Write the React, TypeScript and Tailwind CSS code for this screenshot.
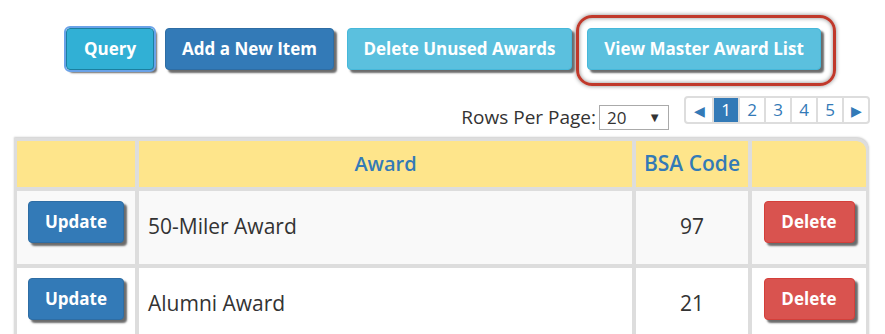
import { ReactNode } from 'react';

const font = { fontFamily: '"Open Sans", "Noto Sans", sans-serif' };

function Btn({ children, className }: { children: ReactNode; className: string }) {
  return (
    <button
      className={`h-[42px] rounded-[4px] border text-white font-bold shadow-[3px_3px_2px_#6b6b6b] ${className}`}
    >
      {children}
    </button>
  );
}

function Pager() {
  const cells = ['◀', '1', '2', '3', '4', '5', '▶'];
  return (
    <div className="flex h-[28px] rounded-[4px] border-2 border-[#ddd] overflow-hidden">
      {cells.map((c, i) => (
        <div
          key={i}
          className={`w-[26px] flex items-center justify-center ${
            i > 0 ? 'border-l-2 border-[#ddd]' : ''
          } ${c === '1' ? 'bg-[#337ab7] text-white border-[#337ab7]' : 'text-[#337ab7]'} ${
            c === '◀' || c === '▶' ? 'text-[14px]' : 'text-[17px]'
          }`}
        >
          {c}
        </div>
      ))}
    </div>
  );
}

const rows = [
  { name: '50-Miler Award', code: '97', bg: 'bg-[#f9f9f9]' },
  { name: 'Alumni Award', code: '21', bg: 'bg-white' },
];

export default function App() {
  return (
    <div className="w-[885px] h-[334px] bg-white overflow-hidden" style={font}>
      {/* action buttons */}
      <div className="flex items-start pt-[15px] pl-[66px]">
        <Btn className="mt-[13px] w-[88px] text-[17px] bg-[#31b0d5] border-[#1b7fa0] outline-2 outline-[#6aa2e8]">
          Query
        </Btn>
        <Btn className="mt-[13px] ml-[11px] w-[169px] text-[17px] bg-[#337ab7] border-[#2e6da4]">
          Add a New Item
        </Btn>
        <Btn className="mt-[13px] ml-[13px] w-[225px] text-[17px] bg-[#5bc0de] border-[#46b8da]">
          Delete Unused Awards
        </Btn>
        <div className="ml-[4px] rounded-[16px] border-[3px] border-[#c0392b] pt-[10px] pb-[13px] pl-[8px] pr-[12px] shadow-[inset_0_0_4px_#888,0_0_4px_#888]">
          <Btn className="w-[234px] text-[17px] bg-[#5bc0de] border-[#46b8da]">View Master Award List</Btn>
        </div>
      </div>

      {/* paging */}
      <div className="flex justify-end items-start mt-[10px] pr-[15px]">
        <div className="flex items-center mt-[7px]">
          <span className="text-[19px] text-[#333] mr-[3px]">Rows Per Page:</span>
          <div className="w-[70px] h-[25px] border border-[#aaa] flex items-center justify-between px-[7px] text-[17px] text-[#333]">
            <span>20</span>
            <span className="text-[13px]">▼</span>
          </div>
        </div>
        <div className="ml-[15px]">
          <Pager />
        </div>
      </div>

      {/* table */}
      <div className="mt-[6px] mx-[14px] w-[855px] border-[3px] border-[#ddd] rounded-tr-[12px] bg-[#ddd] overflow-hidden shadow-[0_-1px_2px_#ccc]">
        <div className="grid grid-cols-[118px_1fr_112px_114px] gap-[4px]">
          <div className="h-[46px] bg-[#fee58b]" />
          <div className="h-[46px] bg-[#fee58b] flex items-center justify-center text-[20px] font-semibold text-[#337ab7]">
            Award
          </div>
          <div className="h-[46px] bg-[#fee58b] flex items-center justify-center text-[21px] font-semibold text-[#337ab7]">
            BSA Code
          </div>
          <div className="h-[46px] bg-[#fee58b] rounded-tr-[9px]" />
          {rows.map((r) => (
            <>
              <div key={r.name + 'u'} className={`h-[73px] ${r.bg} flex items-center justify-center`}>
                <Btn className="w-[96px] bg-[#337ab7] border-[#2e6da4] text-[17px] -mt-[11px]">Update</Btn>
              </div>
              <div className={`h-[73px] ${r.bg} flex items-center pl-[9px] text-[21px] text-[#333]`}>{r.name}</div>
              <div className={`h-[73px] ${r.bg} flex items-center justify-center text-[21px] text-[#333]`}>{r.code}</div>
              <div className={`h-[73px] ${r.bg} flex items-center justify-center`}>
                <Btn className="w-[91px] bg-[#d9534f] border-[#d43f3a] text-[17px] -mt-[11px]">Delete</Btn>
              </div>
            </>
          ))}
        </div>
      </div>
    </div>
  );
}
